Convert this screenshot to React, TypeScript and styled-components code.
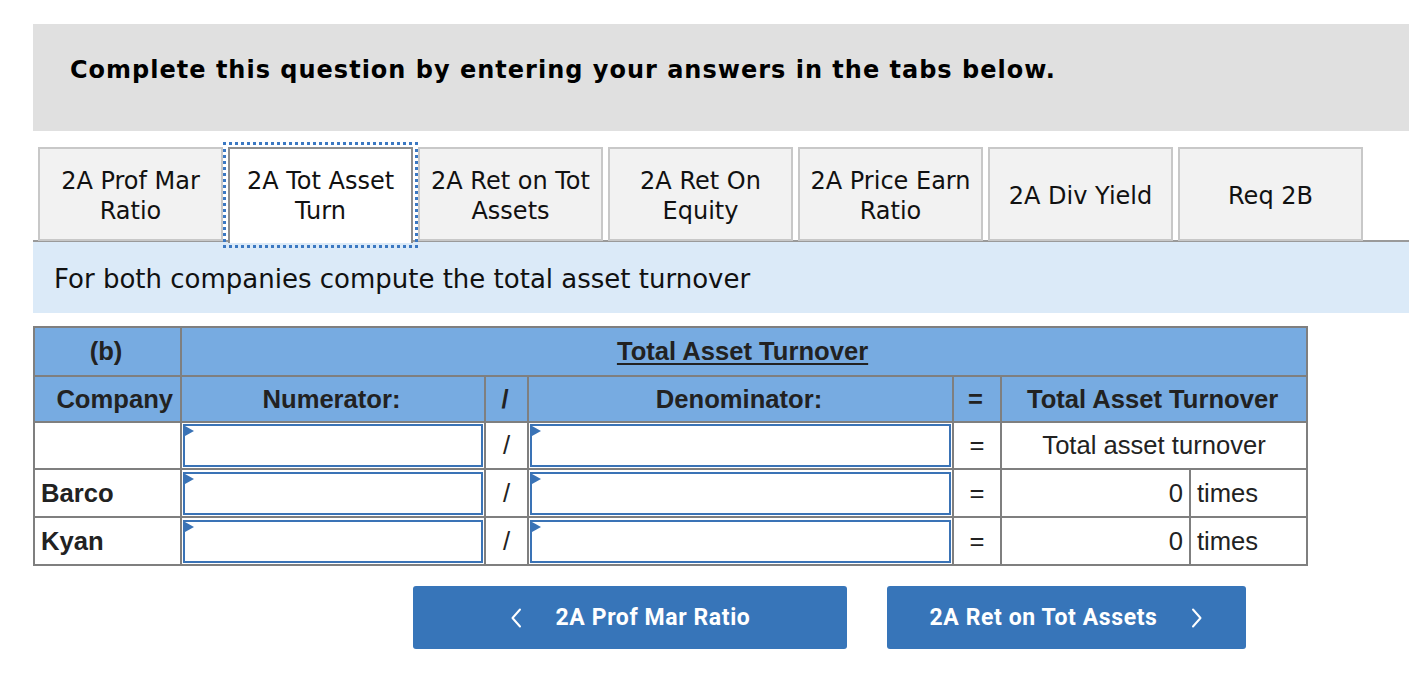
import React from "react";
import styled, { createGlobalStyle } from "styled-components";

const Global = createGlobalStyle`
  html, body { margin: 0; padding: 0; background: #fff; }
  body { font-family: "DejaVu Sans", Verdana, sans-serif; }
  * { box-sizing: border-box; }
`;

const Page = styled.div`
  padding: 24px 0 0 33px;
  width: 1409px;
`;

const Banner = styled.div`
  height: 107px;
  background: #e0e0e0;
  display: flex;
  align-items: center;
  padding-left: 37px;
  padding-bottom: 16px;
  font-family: "DejaVu Sans", Verdana, sans-serif;
  font-weight: bold;
  font-size: 24px;
  letter-spacing: 1px;
  color: #000;
`;

const TabStrip = styled.div`
  margin-top: 15px;
  display: flex;
  gap: 5px;
  padding-left: 5px;
  border-bottom: 2px solid #9a9a9a;
  height: 96px;
  align-items: flex-start;
`;

const Tab = styled.button<{ $active?: boolean }>`
  width: 185px;
  height: ${(p) => (p.$active ? "96px" : "94px")};
  margin-top: 1px;
  background: ${(p) => (p.$active ? "#fff" : "#f2f2f2")};
  border: 2px solid ${(p) => (p.$active ? "#8e8e8e" : "#c8c8c8")};
  border-bottom: ${(p) => (p.$active ? "none" : "2px solid #c8c8c8")};
  outline: ${(p) => (p.$active ? "3px dotted #3b78c2" : "none")};
  outline-offset: 2px;
  font-family: "DejaVu Sans", Verdana, sans-serif;
  font-size: 24px;
  line-height: 30px;
  color: #111;
  text-align: center;
  padding: ${(p) => (p.$active ? "4px 2px" : "4px 2px 0")};
  display: flex;
  align-items: center;
  justify-content: center;
  position: relative;
  z-index: ${(p) => (p.$active ? 1 : 0)};
  margin-bottom: ${(p) => (p.$active ? "-2px" : "0")};
`;

const Instruction = styled.div`
  height: 71px;
  background: #dbeaf8;
  display: flex;
  align-items: center;
  padding-left: 21px;
  padding-top: 2px;
  font-family: "DejaVu Sans", Verdana, sans-serif;
  font-size: 26px;
  color: #111;
`;

const Table = styled.table`
  margin-top: 13px;
  border-collapse: collapse;
  width: 1273px;
  table-layout: fixed;
  font-family: "Liberation Sans", Arial, sans-serif;
  font-size: 25.6px;
  color: #222;
`;

const HeadCell = styled.th<{ $align?: string; $h?: number }>`
  background: #77abe1;
  border: 2px solid #7f7f7f;
  font-weight: bold;
  text-align: ${(p) => p.$align || "center"};
  padding: 0 7px 0 4px;
  height: ${(p) => p.$h || 46}px;
`;

const Underlined = styled.span`
  text-decoration: underline;
  text-underline-offset: 3px;
`;

const Row = styled.tr<{ $h: number }>`
  height: ${(p) => p.$h}px;
`;

const Cell = styled.td<{ $align?: string; $bold?: boolean; $pad?: string }>`
  border: 2px solid #7f7f7f;
  text-align: ${(p) => p.$align || "center"};
  font-weight: ${(p) => (p.$bold ? "bold" : "normal")};
  padding: ${(p) => p.$pad || "0 6px"};
  background: #fff;
`;

const InputCell = styled.td`
  border: 2px solid #7f7f7f;
  padding: 1px;
`;

const FieldWrap = styled.div`
  position: relative;
  height: 43px;
  border: 2px solid #3a73b6;
  background: #fff;
  &::before {
    content: "";
    position: absolute;
    left: 0;
    top: 0;
    border-left: 9px solid #3a73b6;
    border-top: 5px solid transparent;
    border-bottom: 5px solid transparent;
  }
`;

const Field = styled.input`
  width: 100%;
  height: 100%;
  border: none;
  outline: none;
  background: transparent;
  font: inherit;
  padding: 0 8px;
`;

const Nav = styled.div`
  display: flex;
  gap: 40px;
  margin-top: 20px;
  margin-left: 380px;
`;

const NavButton = styled.button<{ $w: number }>`
  width: ${(p) => p.$w}px;
  height: 63px;
  background: #3775b9;
  border: none;
  border-radius: 3px;
  color: #fff;
  font-family: Roboto, "Liberation Sans", sans-serif;
  font-weight: bold;
  font-size: 23px;
  letter-spacing: 0.6px;
  display: flex;
  align-items: center;
  justify-content: center;
  gap: 34px;
  padding: 0;
`;

const Chevron = ({ dir }: { dir: "left" | "right" }) => (
  <svg width="12" height="20" viewBox="0 0 12 20" fill="none">
    <path
      d={dir === "left" ? "M10 1.5 L2.5 10 L10 18.5" : "M2 1.5 L9.5 10 L2 18.5"}
      stroke="#fff"
      strokeWidth="2"
      strokeLinecap="round"
      strokeLinejoin="round"
    />
  </svg>
);

const tabs = [
  ["2A Prof Mar", "Ratio"],
  ["2A Tot Asset", "Turn"],
  ["2A Ret on Tot", "Assets"],
  ["2A Ret On", "Equity"],
  ["2A Price Earn", "Ratio"],
  ["2A Div Yield"],
  ["Req 2B"],
];

const InputPair = () => (
  <>
    <InputCell>
      <FieldWrap>
        <Field />
      </FieldWrap>
    </InputCell>
    <Cell>/</Cell>
    <InputCell>
      <FieldWrap>
        <Field />
      </FieldWrap>
    </InputCell>
    <Cell>=</Cell>
  </>
);

export default function App() {
  return (
    <>
      <Global />
      <Page>
        <Banner>Complete this question by entering your answers in the tabs below.</Banner>
        <TabStrip>
          {tabs.map((t, i) => (
            <Tab key={i} $active={i === 1}>
              <span>
                {t[0]}
                {t[1] && (
                  <>
                    <br />
                    {t[1]}
                  </>
                )}
              </span>
            </Tab>
          ))}
        </TabStrip>
        <Instruction>For both companies compute the total asset turnover</Instruction>
        <Table>
          <colgroup>
            <col style={{ width: 147 }} />
            <col style={{ width: 304 }} />
            <col style={{ width: 43 }} />
            <col style={{ width: 425 }} />
            <col style={{ width: 48 }} />
            <col style={{ width: 189 }} />
            <col style={{ width: 117 }} />
          </colgroup>
          <thead>
            <tr>
              <HeadCell $h={49}>(b)</HeadCell>
              <HeadCell colSpan={6}>
                <Underlined>Total Asset Turnover</Underlined>
              </HeadCell>
            </tr>
            <tr>
              <HeadCell $align="right">Company</HeadCell>
              <HeadCell>Numerator:</HeadCell>
              <HeadCell>/</HeadCell>
              <HeadCell>Denominator:</HeadCell>
              <HeadCell>=</HeadCell>
              <HeadCell colSpan={2}>Total Asset Turnover</HeadCell>
            </tr>
          </thead>
          <tbody>
            <Row $h={46}>
              <Cell />
              <InputPair />
              <Cell colSpan={2}>Total asset turnover</Cell>
            </Row>
            <Row $h={48}>
              <Cell $align="left" $bold>Barco</Cell>
              <InputPair />
              <Cell $align="right" $pad="0 6px 0 0">0</Cell>
              <Cell $align="left" $pad="0 0 0 6px">times</Cell>
            </Row>
            <Row $h={48}>
              <Cell $align="left" $bold>Kyan</Cell>
              <InputPair />
              <Cell $align="right" $pad="0 6px 0 0">0</Cell>
              <Cell $align="left" $pad="0 0 0 6px">times</Cell>
            </Row>
          </tbody>
        </Table>
        <Nav>
          <NavButton $w={434}>
            <Chevron dir="left" />
            <span>2A Prof Mar Ratio</span>
          </NavButton>
          <NavButton $w={359}>
            <span>2A Ret on Tot Assets</span>
            <Chevron dir="right" />
          </NavButton>
        </Nav>
      </Page>
    </>
  );
}
